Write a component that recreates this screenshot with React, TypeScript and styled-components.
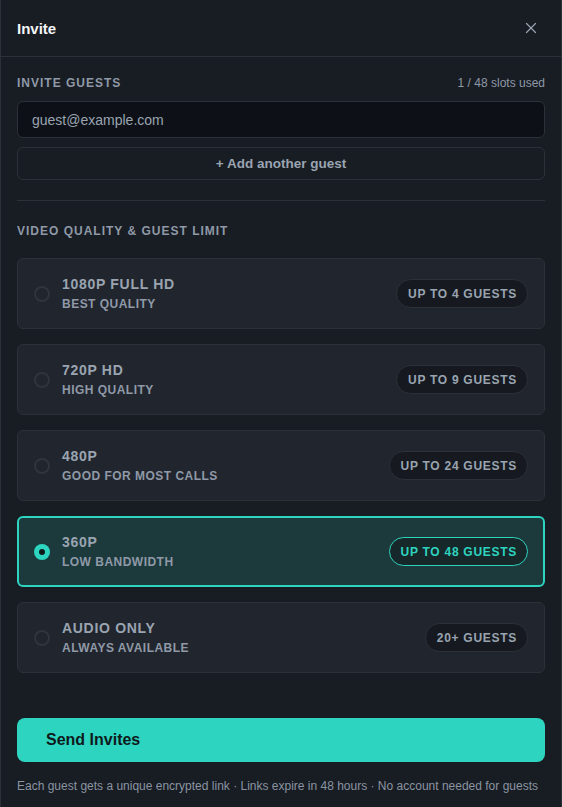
import React, { useState } from 'react';
import styled, { createGlobalStyle } from 'styled-components';
import { X } from 'lucide-react';

type Tier = {
  id: string;
  title: string;
  subtitle: string;
  limit: string;
};

const tiers: Tier[] = [
  { id: '1080', title: '1080p Full HD', subtitle: 'Best quality', limit: 'Up to 4 guests' },
  { id: '720', title: '720p HD', subtitle: 'High quality', limit: 'Up to 9 guests' },
  { id: '480', title: '480p', subtitle: 'Good for most calls', limit: 'Up to 24 guests' },
  { id: '360', title: '360p', subtitle: 'Low bandwidth', limit: 'Up to 48 guests' },
  { id: 'audio', title: 'Audio only', subtitle: 'Always available', limit: '20+ guests' },
];

const GlobalStyle = createGlobalStyle`
  html, body {
    margin: 0;
    padding: 0;
    background: #0e1116;
  }
  * {
    box-sizing: border-box;
  }
`;

const Panel = styled.div`
  width: 562px;
  min-height: 807px;
  background: #181c23;
  border-left: 1px solid #2c3139;
  border-right: 1px solid #2c3139;
  font-family: 'Liberation Sans', Arial, sans-serif;
  color: #9aa4b1;
`;

const Header = styled.header`
  height: 57px;
  display: flex;
  align-items: center;
  justify-content: space-between;
  padding: 0 16px;
  border-bottom: 1px solid #2c3139;
`;

const Title = styled.h2`
  margin: 0;
  font-size: 15px;
  font-weight: 700;
  color: #f3f5f7;
`;

const CloseButton = styled.button`
  display: flex;
  align-items: center;
  justify-content: center;
  width: 28px;
  height: 28px;
  padding: 0;
  border: none;
  background: transparent;
  color: #9aa4b1;
  cursor: pointer;
`;

const Body = styled.div`
  padding: 18px 16px 0 16px;
  display: flex;
  flex-direction: column;
`;

const LabelRow = styled.div`
  display: flex;
  align-items: center;
  justify-content: space-between;
  margin-bottom: 10px;
`;

const SectionLabel = styled.div<{ $gap?: number }>`
  font-size: 12px;
  line-height: 16px;
  font-weight: 700;
  letter-spacing: 1px;
  text-transform: uppercase;
  color: #8f99a7;
  margin-bottom: ${(p) => p.$gap ?? 0}px;
`;

const Count = styled.span`
  font-size: 12px;
  color: #8f99a7;
`;

const EmailInput = styled.input`
  height: 37px;
  width: 100%;
  padding: 0 14px;
  border: 1px solid #2c3139;
  border-radius: 6px;
  background: #0d1117;
  color: #c9d1d9;
  font-family: inherit;
  font-size: 14px;
  outline: none;

  &::placeholder {
    color: #9aa4b1;
  }
`;

const AddButton = styled.button`
  margin-top: 9px;
  height: 33px;
  width: 100%;
  border: 1px solid #2c3139;
  border-radius: 6px;
  background: transparent;
  color: #9aa4b1;
  font-family: inherit;
  font-size: 13.5px;
  font-weight: 700;
  cursor: pointer;
`;

const Divider = styled.hr`
  margin: 20px 0 22px;
  border: none;
  border-top: 1px solid #2c3139;
`;

const TierList = styled.div`
  display: flex;
  flex-direction: column;
  gap: 15px;
`;

const TierCard = styled.label<{ $active: boolean }>`
  display: flex;
  align-items: center;
  gap: 12px;
  height: 71px;
  padding: 0 ${(p) => (p.$active ? 15 : 16)}px 0 ${(p) => (p.$active ? 15 : 16)}px;
  border: ${(p) => (p.$active ? '2px solid #2dd4bf' : '1px solid #2c3139')};
  border-radius: 6px;
  background: ${(p) => (p.$active ? '#1c3a3c' : '#21252d')};
  cursor: pointer;
`;

const Radio = styled.span<{ $active: boolean }>`
  flex: none;
  width: 16px;
  height: 16px;
  border-radius: 50%;
  display: flex;
  align-items: center;
  justify-content: center;
  border: ${(p) => (p.$active ? 'none' : '2px solid #2f343d')};
  background: ${(p) => (p.$active ? '#2dd4bf' : 'transparent')};

  &::after {
    content: '';
    display: ${(p) => (p.$active ? 'block' : 'none')};
    width: 6px;
    height: 6px;
    border-radius: 50%;
    background: #0f1a1c;
  }
`;

const TierText = styled.div`
  flex: 1;
  display: flex;
  flex-direction: column;
  gap: 4px;
`;

const TierTitle = styled.span`
  font-size: 14px;
  line-height: 17px;
  font-weight: 700;
  letter-spacing: 0.05em;
  text-transform: uppercase;
  color: #9aa4b1;
`;

const TierSub = styled.span`
  font-size: 12px;
  line-height: 15px;
  font-weight: 700;
  letter-spacing: 0.04em;
  text-transform: uppercase;
  color: #8f99a7;
`;

const Pill = styled.span<{ $active: boolean }>`
  flex: none;
  height: 29px;
  display: flex;
  align-items: center;
  padding: 0 10px 0 11px;
  border-radius: 999px;
  border: 1px solid ${(p) => (p.$active ? '#2dd4bf' : '#2c3139')};
  background: ${(p) => (p.$active ? '#17282b' : '#161a20')};
  color: ${(p) => (p.$active ? '#2dd4bf' : '#9aa4b1')};
  font-size: 12px;
  font-weight: 700;
  letter-spacing: 0.06em;
  text-transform: uppercase;
`;

const Footer = styled.div`
  padding: 45px 16px 0 16px;
`;

const SendButton = styled.button`
  width: 100%;
  height: 44px;
  padding: 0 29px;
  border: none;
  border-radius: 8px;
  background: #2dd4bf;
  color: #0f1a1c;
  font-family: inherit;
  font-size: 16px;
  font-weight: 700;
  text-align: left;
  cursor: pointer;
`;

const Note = styled.p`
  margin: 16px 0 0;
  font-size: 12px;
  line-height: 16px;
  color: #8a94a2;
`;

export default function App() {
  const [selected, setSelected] = useState('360');

  return (
    <>
      <GlobalStyle />
      <Panel>
        <Header>
          <Title>Invite</Title>
          <CloseButton aria-label="Close">
            <X size={18} strokeWidth={1.6} />
          </CloseButton>
        </Header>
        <Body>
          <LabelRow>
            <SectionLabel>Invite guests</SectionLabel>
            <Count>1 / 48 slots used</Count>
          </LabelRow>
          <EmailInput placeholder="guest@example.com" />
          <AddButton>+ Add another guest</AddButton>
          <Divider />
          <SectionLabel $gap={19}>Video quality &amp; guest limit</SectionLabel>
          <TierList>
            {tiers.map((tier) => {
              const active = tier.id === selected;
              return (
                <TierCard key={tier.id} $active={active} onClick={() => setSelected(tier.id)}>
                  <Radio $active={active} />
                  <TierText>
                    <TierTitle>{tier.title}</TierTitle>
                    <TierSub>{tier.subtitle}</TierSub>
                  </TierText>
                  <Pill $active={active}>{tier.limit}</Pill>
                </TierCard>
              );
            })}
          </TierList>
        </Body>
        <Footer>
          <SendButton>Send Invites</SendButton>
          <Note>
            Each guest gets a unique encrypted link · Links expire in 48 hours · No account needed
            for guests
          </Note>
        </Footer>
      </Panel>
    </>
  );
}
